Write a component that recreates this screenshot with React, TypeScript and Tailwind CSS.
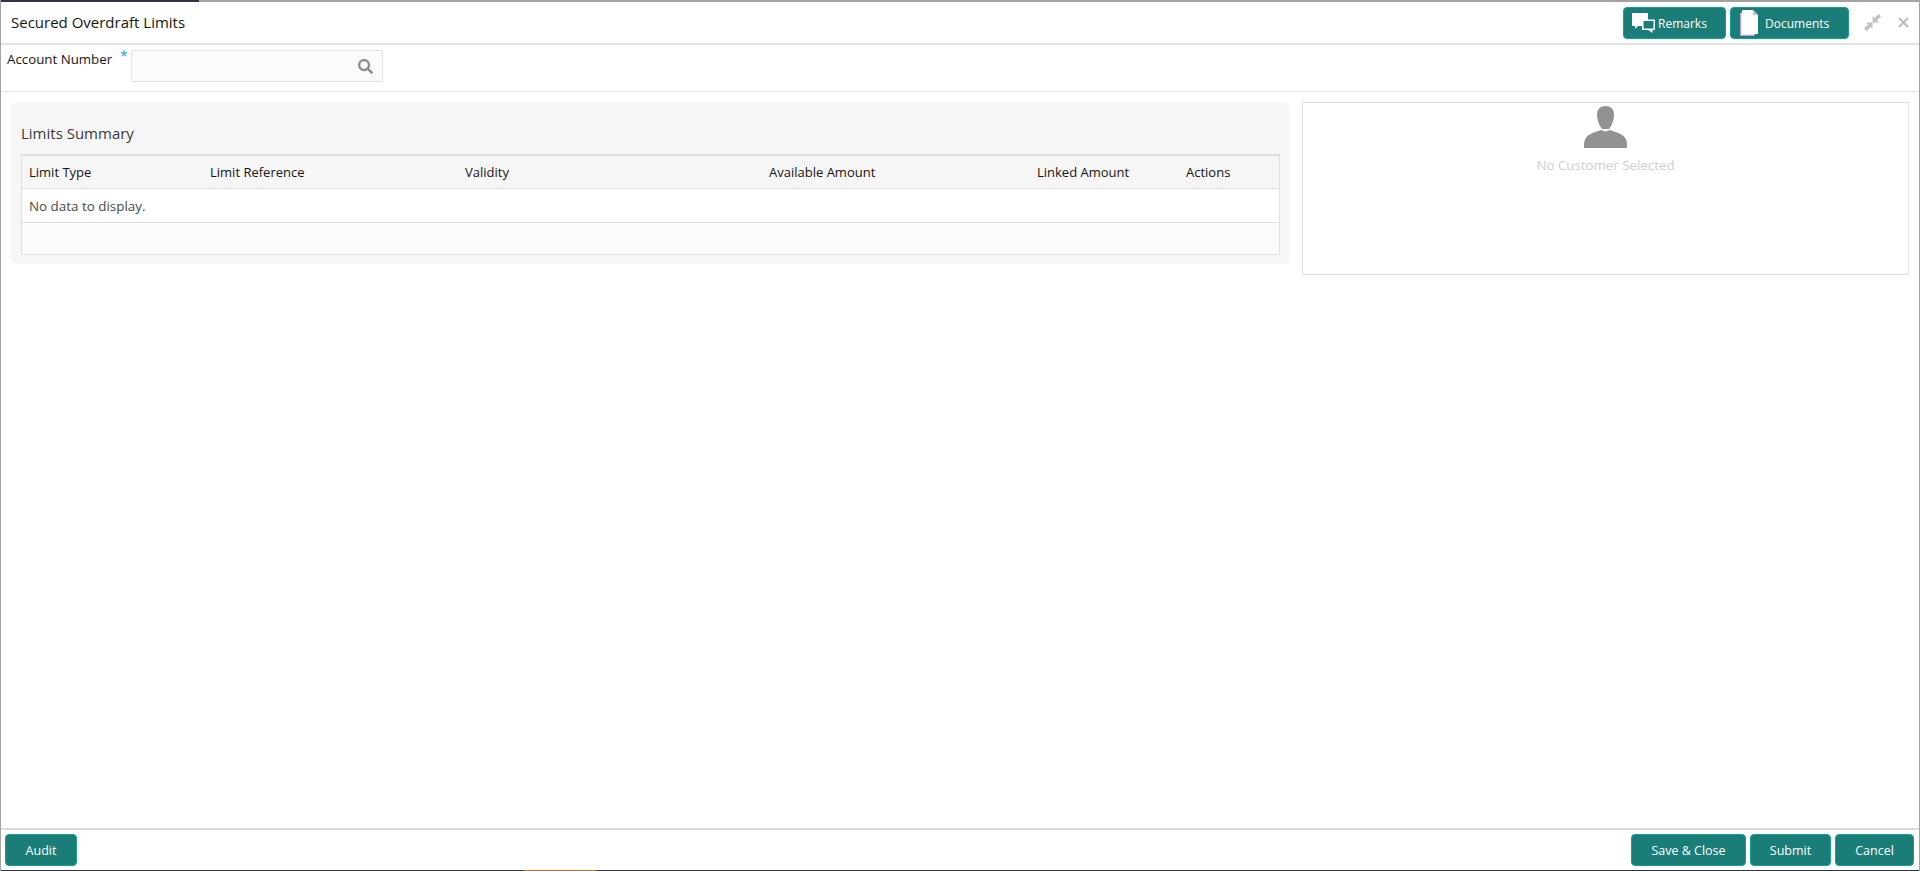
import React from 'react';
import { FaSearch } from 'react-icons/fa';

const font = "font-['Open_Sans','Noto_Sans',sans-serif]";

const columns = [
  { label: 'Limit Type', width: 'w-[181px]' },
  { label: 'Limit Reference', width: 'w-[255px]' },
  { label: 'Validity', width: 'w-[304px]' },
  { label: 'Available Amount', width: 'w-[268px]' },
  { label: 'Linked Amount', width: 'w-[149px]' },
  { label: 'Actions', width: 'flex-1' },
];

const TealButton: React.FC<{ className?: string; children: React.ReactNode }> = ({ className = '', children }) => (
  <button className={`h-8 flex items-center justify-center rounded-[4px] border border-[#14a096] bg-[#1b7d78] text-white ${className}`}>
    {children}
  </button>
);

const RemarksIcon = () => (
  <svg width="23" height="20" viewBox="0 0 23 20" fill="none">
    <path d="M0 0h16v13H6l-3 3v-3H0z" fill="#fff" />
    <rect x="10.750" y="7.250" width="11.500" height="9" fill="#1b7d78" stroke="#fff" strokeWidth="1.500" />
    <path d="M15.500 16.500h5V20z" fill="#fff" />
  </svg>
);

const DocumentsIcon = () => (
  <svg width="18" height="26" viewBox="0 0 18 26" fill="none">
    <path d="M0.500 3h14v22.500h-14z" fill="#e8e4f0" stroke="#b9a7dc" strokeWidth="1" />
    <path d="M2 0h11l5 5v19H2z" fill="#fff" />
    <path d="M13 0l5 5h-5z" fill="#c9b8e8" />
  </svg>
);

const MinimizeIcon = () => (
  <svg width="17" height="17" viewBox="0 0 17 17" fill="#c2c2c2">
    <path d="M14.500 0L17 2.500l-4 4 2 2H8.500V2l2 2z" />
    <path d="M2.500 17L0 14.500l4-4-2-2h6.500V15l-2-2z" />
  </svg>
);

const CloseIcon = () => (
  <svg width="11" height="11" viewBox="0 0 11 11" fill="none" stroke="#bdbdbd" strokeWidth="2.200">
    <path d="M1 1l9 9M10 1l-9 9" />
  </svg>
);

const PersonIcon = () => (
  <svg width="43" height="42" viewBox="0 0 43 42" fill="#929292">
    <path d="M21.500 0c5 0 8.500 3 8.500 8.500 0 5.500-2 11-5 14.500h-7C15 19.500 13 14 13 8.500 13 3 16.500 0 21.500 0z" />
    <path d="M17 24l4.500 1.500L26 24c5 2 13.500 3.500 16 9.500 1 2 1 5 1 8.500H0c0-3.500 0-6.500 1-8.500 2.500-6 11-7.500 16-9.500z" />
  </svg>
);

export default function App() {
  return (
    <div className={`${font} h-[871px] w-full flex flex-col bg-white border-x border-x-[#a3a3a3] text-[#161513] overflow-hidden`}>
      <div className="h-[2px] -mx-px flex shrink-0 bg-[#a3a3a3]">
        <div className="w-[199px] bg-[#2f3344]" />
      </div>

      {/* title bar */}
      <div className="h-[43px] shrink-0 flex items-center pl-[10px] pr-[10px] border-b-2 border-[#dfe3e3]">
        <h1 className="text-[15px] flex-1 -mt-[1px]">Secured Overdraft Limits</h1>
        <div className="flex items-center gap-1">
          <TealButton className="w-[103px] !justify-start pl-[8px] gap-[3px] text-[12px]">
            <RemarksIcon />
            <span className="pt-[2px]">Remarks</span>
          </TealButton>
          <TealButton className="w-[119px] !justify-start pl-[9px] gap-[7px] text-[12px]">
            <DocumentsIcon />
            <span className="pt-[2px]">Documents</span>
          </TealButton>
        </div>
        <div className="ml-[15px] flex items-center gap-[17px]">
          <MinimizeIcon />
          <CloseIcon />
        </div>
      </div>

      {/* account search */}
      <div className="h-[47px] shrink-0 flex pl-[6px] border-b border-[#e0e0e0]">
        <span className="text-[13.300px] mt-[5px] w-[113px]">Account Number</span>
        <span className="text-[#2aa5dc] text-[14px] w-[11px]">*</span>
        <div className="mt-[5px] w-[252px] h-[32px] flex items-center justify-end pr-[9px] rounded-[2px] border border-[#e3e3e3] bg-[#fbfbfb]">
          <FaSearch className="text-[#8f8f8f] text-[15px]" />
        </div>
      </div>

      {/* content */}
      <div className="flex-1 flex items-start pt-[10px] pl-[10px] pr-[10px]">
        <section className="w-[1279px] h-[162px] rounded-[6px] bg-[#f6f6f6] px-[10px] pt-[20px]">
          <h2 className="text-[15px] leading-[22px] text-[#3b3a38] mb-[10px]">Limits Summary</h2>
          <div className="border-x border-b border-t-2 border-[#e0e0e0]">
            <div className="flex h-[33px] items-center pt-[2px] border-b border-[#e0e0e0] text-[13px]">
              {columns.map((c) => (
                <div key={c.label} className={`${c.width} pl-[7px]`}>{c.label}</div>
              ))}
            </div>
            <div className="h-[34px] flex items-center pl-[7px] pt-[2px] border-b border-[#e0e0e0] bg-white text-[13.400px] text-[#4a4a48]">
              No data to display.
            </div>
            <div className="h-[31px] bg-[#fbfbfb]" />
          </div>
        </section>

        <aside className="ml-[12px] flex-1 h-[173px] border border-[#e0e0e0] flex flex-col items-center pt-[3px]">
          <PersonIcon />
          <p className="mt-[8px] text-[13.300px] text-[#cfcfcf]">No Customer Selected</p>
        </aside>
      </div>

      {/* footer */}
      <div className="h-[42px] shrink-0 flex items-start pt-[4px] pl-[4px] pr-[5px] border-t-2 border-[#dcdcdc]">
        <TealButton className="w-[72px] text-[12.500px] pt-[3px]">Audit</TealButton>
        <div className="ml-auto flex gap-1">
          <TealButton className="w-[115px] text-[12.500px] pt-[3px]">Save &amp; Close</TealButton>
          <TealButton className="w-[81px] text-[12.500px] pt-[3px]">Submit</TealButton>
          <TealButton className="w-[79px] text-[12.500px] pt-[3px]">Cancel</TealButton>
        </div>
      </div>

      <div className="h-[1px] -mx-px flex shrink-0 bg-[#2f3344]">
        <div className="ml-[524px] w-[73px] bg-[#b5733a]" />
      </div>
    </div>
  );
}
